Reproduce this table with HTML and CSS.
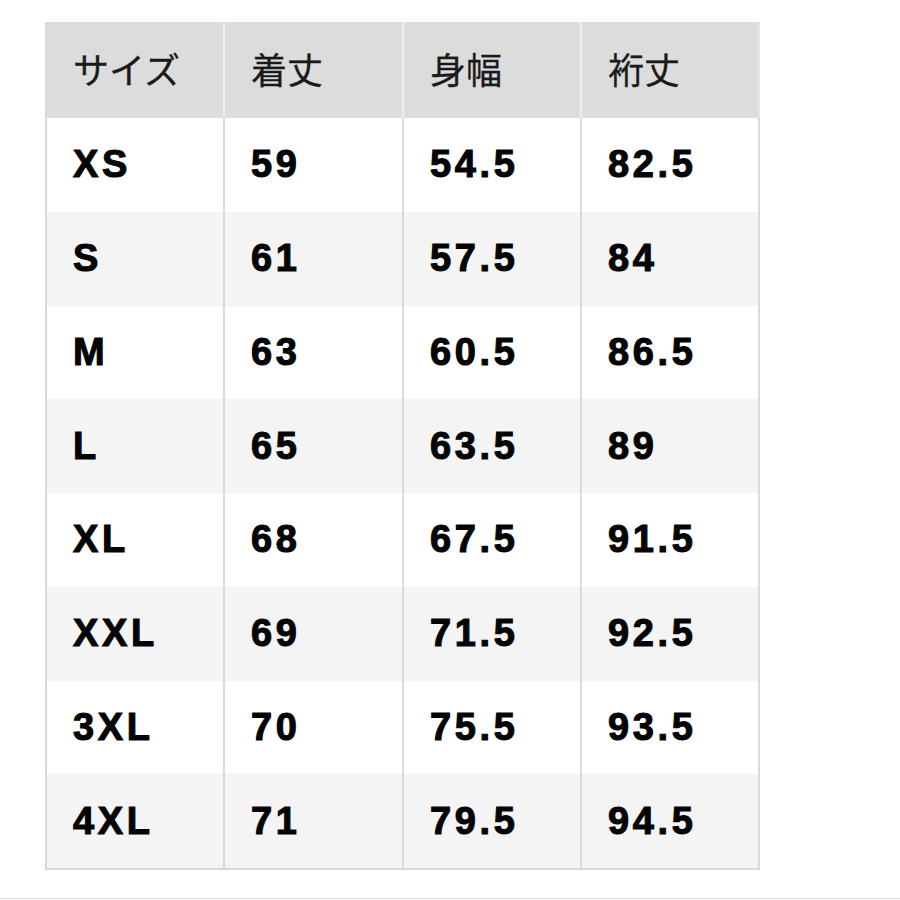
FILE: index.html
```html
<!DOCTYPE html>
<html lang="ja">
<head>
<meta charset="utf-8">
<title>サイズ表</title>
<link rel="stylesheet" href="styles.css">
</head>
<body>
<div class="page">
  <div class="size-table">
    <div class="cell head">サイズ</div><div class="cell head">着丈</div><div class="cell head">身幅</div><div class="cell head last">裄丈</div>

    <div class="cell">XS</div><div class="cell">59</div><div class="cell">54.5</div><div class="cell last">82.5</div>
    <div class="cell alt">S</div><div class="cell alt">61</div><div class="cell alt">57.5</div><div class="cell alt last">84</div>
    <div class="cell">M</div><div class="cell">63</div><div class="cell">60.5</div><div class="cell last">86.5</div>
    <div class="cell alt">L</div><div class="cell alt">65</div><div class="cell alt">63.5</div><div class="cell alt last">89</div>
    <div class="cell">XL</div><div class="cell">68</div><div class="cell">67.5</div><div class="cell last">91.5</div>
    <div class="cell alt">XXL</div><div class="cell alt">69</div><div class="cell alt">71.5</div><div class="cell alt last">92.5</div>
    <div class="cell">3XL</div><div class="cell">70</div><div class="cell">75.5</div><div class="cell last">93.5</div>
    <div class="cell alt">4XL</div><div class="cell alt">71</div><div class="cell alt">79.5</div><div class="cell alt last">94.5</div>
  </div>
  <div class="rule"></div>
</div>
</body>
</html>
```

FILE: styles.css
```css
html, body {
  margin: 0;
  padding: 0;
  background: #ffffff;
}

.page {
  padding-top: 22px;
}

.size-table {
  margin-left: 45px;
  width: 715px;
  box-sizing: border-box;
  display: grid;
  grid-template-columns: 178px 179px 178px 178px;
  grid-template-rows: 96px repeat(8, 93.75px);
  border-left: 2px solid #d9d9d9;
  border-bottom: 2px solid #d9d9d9;
}

.cell {
  box-sizing: border-box;
  display: flex;
  align-items: center;
  padding-left: 26px;
  border-right: 2px solid #dadada;
  background: #ffffff;
  color: #050505;
  font-family: "Liberation Sans", Arial, sans-serif;
  font-weight: 700;
  font-size: 38px;
  letter-spacing: 3.6px;
  -webkit-text-stroke: 1.1px #050505;
}

.cell.alt {
  background: #f4f4f4;
}

.cell.head {
  background: #dcdcdc;
  border-right: 2px solid #eeeeee;
  color: #1a1a1a;
  font-family: "Noto Sans CJK JP", "Noto Sans", sans-serif;
  font-weight: 400;
  font-size: 36px;
  letter-spacing: 0;
  -webkit-text-stroke: 0.3px #1a1a1a;
  padding-bottom: 4px;
}

.cell.last {
  border-right: 2px solid #dadada;
}

.cell.head.last {
  border-right: 2px solid #e4e4e4;
}

.rule {
  margin-top: 28px;
  height: 1px;
  background: #dddddd;
}
```
